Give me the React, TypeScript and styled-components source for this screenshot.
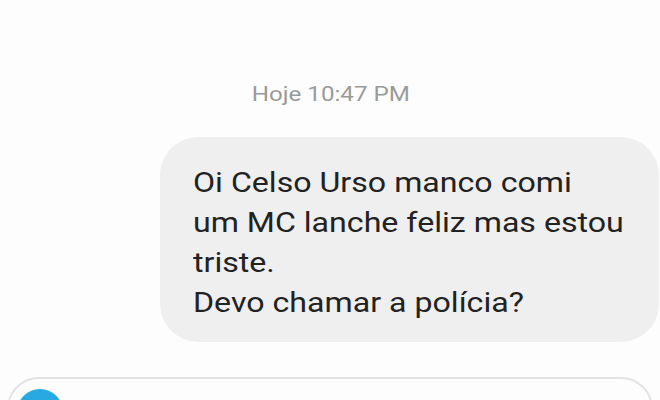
import React from 'react'
import styled, { createGlobalStyle } from 'styled-components'

const GlobalStyle = createGlobalStyle`
  html, body {
    margin: 0;
    padding: 0;
    background: #fdfdfd;
  }
  body {
    font-family: Roboto, 'Liberation Sans', Arial, sans-serif;
  }
`

// Chat screen
const SScreen = styled.div`
  width: 660px;
  height: 400px;
  overflow: hidden;
  display: flex;
  flex-direction: column;
  background: #fdfdfd;
`

// The screenshot is stretched sideways, so the glyphs are wider than tall
const SWide = styled.span<{ $scale: number; $origin?: string }>`
  display: inline-block;
  transform: scaleX(${p => p.$scale});
  transform-origin: ${p => p.$origin || 'left'} center;
`

// Day / time separator
const STimestamp = styled.div`
  margin-top: 83px;
  text-align: center;
  font-size: 19.5px;
  line-height: 24px;
  color: #9a9a9a;
  padding-left: 2px;
`

const SMessageRow = styled.div`
  display: flex;
  justify-content: flex-end;
  margin-top: 30px;
  padding-right: 1px;
`

// Message bubble
const SBubble = styled.div`
  width: 499px;
  box-sizing: border-box;
  padding: 26px 20px 19px 33px;
  background: #efefef;
  border-radius: 38px;
  color: #222;
  font-size: 27px;
  line-height: 40px;
  white-space: nowrap;
`

// Message composer at the bottom
const SComposer = styled.div`
  margin: 35px 7px 0;
  height: 64px;
  flex-shrink: 0;
  display: flex;
  align-items: flex-start;
  padding: 10px 8px;
  box-sizing: border-box;
  border: 2px solid #e3e3e3;
  border-radius: 34px;
  background: #fdfdfd;
`

const SAvatar = styled.div`
  width: 46px;
  height: 46px;
  border-radius: 50%;
  background: #29a9e1;
`

export default function App() {
  return (
    <>
      <GlobalStyle />
      <SScreen>
        <STimestamp>
          <SWide $scale={1.24} $origin='center'>Hoje 10:47 PM</SWide>
        </STimestamp>
        <SMessageRow>
          <SBubble>
            <SWide $scale={1.19}>
              Oi Celso Urso manco comi
              <br />
              um MC lanche feliz mas estou
              <br />
              triste.
              <br />
              Devo chamar a polícia?
            </SWide>
          </SBubble>
        </SMessageRow>
        <SComposer>
          <SAvatar />
        </SComposer>
      </SScreen>
    </>
  )
}
